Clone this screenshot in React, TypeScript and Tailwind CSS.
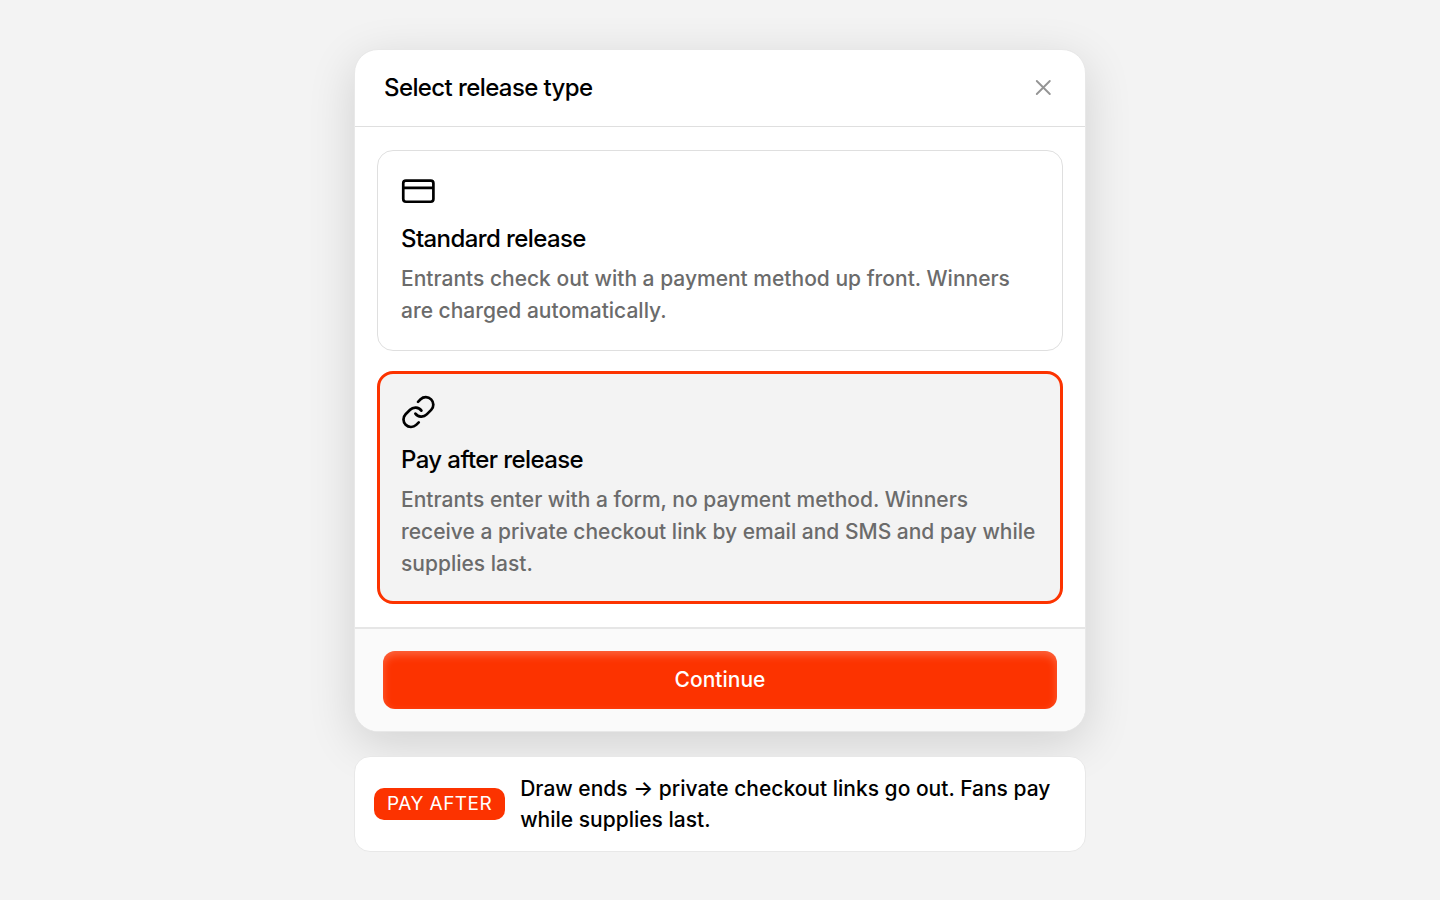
import { useState, type ReactNode } from 'react';

type ReleaseType = 'standard' | 'pay-after';

function CardIcon() {
  return (
    <svg className="size-9" viewBox="0 0 24 24" fill="none" stroke="currentColor" strokeWidth="1.8" aria-hidden="true">
      <rect x="1.5" y="4.4" width="20.1" height="14.1" rx="1.8" />
      <path d="M1.5 9.2h20.1" />
    </svg>
  );
}

function LinkIcon() {
  return (
    <svg className="size-9" viewBox="0.4 0.6 24 24" fill="none" stroke="currentColor" strokeWidth="1.8" strokeLinecap="round" strokeLinejoin="round" aria-hidden="true">
      <path d="M10 13a5 5 0 0 0 7.54.54l3-3a5 5 0 0 0-7.07-7.07l-1.72 1.71" />
      <path d="M14 11a5 5 0 0 0-7.54-.54l-3 3a5 5 0 0 0 7.07 7.07l1.71-1.71" />
    </svg>
  );
}

interface OptionProps {
  value: ReleaseType;
  selected: boolean;
  onSelect: (value: ReleaseType) => void;
  icon: ReactNode;
  title: string;
  description: string;
}

function ReleaseOption({ value, selected, onSelect, icon, title, description }: OptionProps) {
  return (
    <label
      className={
        selected
          ? 'relative block cursor-pointer rounded-2xl border-3 border-[#fc3300] bg-[#f3f3f3] p-[21px]'
          : 'relative block cursor-pointer rounded-2xl border border-[#dfdfdf] bg-white p-[23px]'
      }
    >
      <input
        type="radio"
        name="release-type"
        value={value}
        checked={selected}
        onChange={() => onSelect(value)}
        className="sr-only"
      />
      {icon}
      <span className="mt-[13px] block text-2xl font-medium tracking-tight text-black">{title}</span>
      <span className="mt-2 block text-[21px] leading-8 font-medium text-[#6b6b6b]">{description}</span>
    </label>
  );
}

export default function App() {
  const [selected, setSelected] = useState<ReleaseType>('pay-after');

  return (
    <main className="flex min-h-screen flex-col items-center justify-center gap-6 bg-[#f3f3f3] p-6 font-['Inter','Liberation_Sans',sans-serif] text-black">
      <section
        role="dialog"
        aria-labelledby="release-title"
        className="w-full max-w-[732px] overflow-hidden rounded-3xl border border-[#e8e8e8] bg-white shadow-[0_12px_48px_rgba(0,0,0,0.14)]"
      >
        <header className="flex items-center justify-between border-b border-[#dfdfdf] px-[29px] py-[22px]">
          <h1 id="release-title" className="text-2xl font-medium tracking-tight">
            Select release type
          </h1>
          <button type="button" aria-label="Close" className="text-[#959595]">
            <svg className="size-6" viewBox="0 0 24 24" fill="none" stroke="currentColor" strokeWidth="1.9" strokeLinecap="round" aria-hidden="true">
              <path d="M4.8 5l13 13M17.8 5l-13 13" />
            </svg>
          </button>
        </header>

        <fieldset aria-labelledby="release-title" className="flex flex-col gap-5 px-[22px] py-[23px]">
          <ReleaseOption
            value="standard"
            selected={selected === 'standard'}
            onSelect={setSelected}
            icon={<CardIcon />}
            title="Standard release"
            description="Entrants check out with a payment method up front. Winners are charged automatically."
          />
          <ReleaseOption
            value="pay-after"
            selected={selected === 'pay-after'}
            onSelect={setSelected}
            icon={<LinkIcon />}
            title="Pay after release"
            description="Entrants enter with a form, no payment method. Winners receive a private checkout link by email and SMS and pay while supplies last."
          />
        </fieldset>

        <footer className="border-t-2 border-[#e6e6e6] bg-[#fafafa] px-7 py-[22px]">
          <button
            type="button"
            className="h-[58px] w-full rounded-xl bg-[#fc3300] text-[21px] font-medium text-white shadow-[inset_0_4px_8px_rgba(255,255,255,0.25)]"
          >
            Continue
          </button>
        </footer>
      </section>

      <aside className="flex w-full max-w-[732px] items-center gap-[15px] rounded-2xl border border-[#e8e8e8] bg-white px-[19px] py-4">
        <span className="shrink-0 rounded-[10px] bg-[#fc3300] px-[13px] text-[19px] leading-8 tracking-wide text-white">
          PAY AFTER
        </span>
        <p className="text-[21px] leading-[31px] font-medium">
          Draw ends → private checkout links go out. Fans pay while supplies last.
        </p>
      </aside>
    </main>
  );
}
